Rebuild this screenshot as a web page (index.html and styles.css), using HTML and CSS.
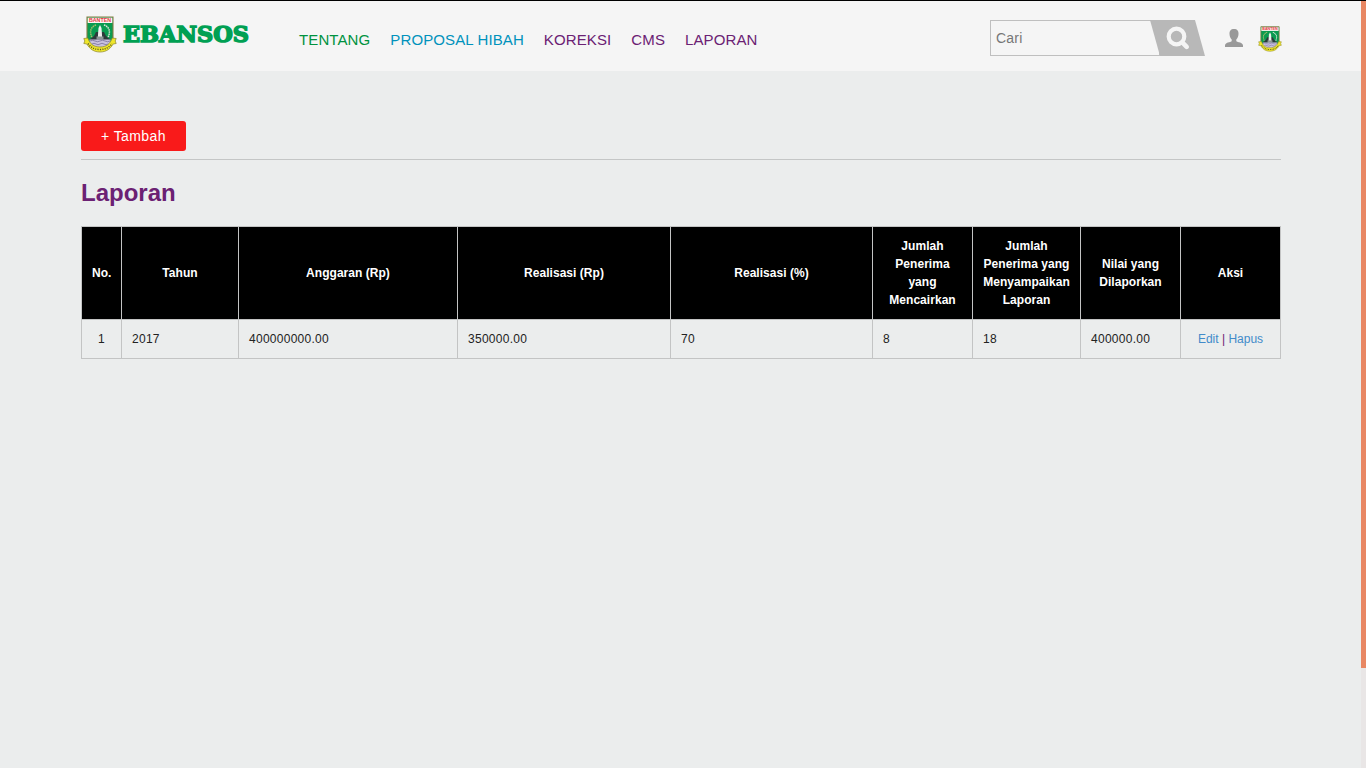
FILE: index.html
```html
<!DOCTYPE html>
<html lang="id">
<head>
<meta charset="utf-8">
<title>Laporan - EBANSOS</title>
<link rel="stylesheet" href="styles.css">
</head>
<body>
<svg class="defs" aria-hidden="true">
  <symbol id="crest" viewBox="0 0 34 37">
    <path d="M4 1h26v23c0 5-7 8-13 10C11 32 4 29 4 24z" fill="#0a9b50" stroke="#877c43" stroke-width="1.100"/>
    <path d="M4.700 1.700h24.600V7H4.700z" fill="#fff4f3"/>
    <path d="M10 23c-4-6-3-12 3-14" fill="none" stroke="#a9bd6a" stroke-width="1.500" stroke-dasharray="1.500 .7"/>
    <path d="M24 23c4-6 3-12-3-14" fill="none" stroke="#dfe3d8" stroke-width="1.500" stroke-dasharray="1.500 .7"/>
    <path d="M6 24l5-4 2-4h8l2 4 5 4z" fill="#2c3a3a"/>
    <path d="M14.700 23l.8-11L17 9l1.500 3 .8 11z" fill="#f0f0ee"/>
    <path d="M13.500 23.500v-3h7v3z" fill="#8c9696"/>
    <path d="M6.500 23.500h21v4l-5 4h-11l-5-4z" fill="#c9c0de"/>
    <path d="M7 25q2.500-1.500 5 0t5 0 5 0 5 0M9 28q2-1.500 4 0t4 0 4 0 4 0" fill="none" stroke="#77729d" stroke-width=".8"/>
    <path d="M.8 22.500l4-.5c2 6 6 9 12.200 9s10.200-3 12.200-9l4 .5-1 2.500 1 2.500-3 .5c-3 5-7 8-13.200 8S6.800 33 3.800 28l-3-.5 1-2.500z" fill="#efe72a" stroke="#8b842b" stroke-width=".7"/>
    <path d="M5 27.500q4 6 12 6t12-6" fill="none" stroke="#5f5b22" stroke-width="1.500" stroke-dasharray="1.100 1.200"/>
  </symbol>
</svg>
<header class="topbar">
  <div class="wrap topbar-inner">
    <a class="brand" href="#">
      <svg class="brand-crest" viewBox="0 0 34 37"><use href="#crest"/><text x="17" y="6.100" class="crest-name" textLength="22" lengthAdjust="spacingAndGlyphs">BANTEN</text></svg>
      <svg class="brand-name" viewBox="0 0 130 24"><text x="1" y="19.400" textLength="126" lengthAdjust="spacingAndGlyphs">EBANSOS</text></svg>
    </a>
    <nav class="menu">
      <a class="green" href="#">TENTANG</a>
      <a class="blue" href="#">PROPOSAL HIBAH</a>
      <a href="#">KOREKSI</a>
      <a href="#">CMS</a>
      <a href="#">LAPORAN</a>
    </nav>
    <form class="search">
      <input type="text" placeholder="Cari" aria-label="Cari">
      <svg class="search-btn" viewBox="0 0 55 36">
        <path d="M0 0h45l10 36H10z" fill="#b8b8b8"/>
        <circle cx="26.500" cy="16.500" r="7.800" fill="none" stroke="#f5f5f5" stroke-width="4.200"/>
        <path d="M32.300 22.300l4.400 4.500" stroke="#f5f5f5" stroke-width="4.600" stroke-linecap="round"/>
      </svg>
    </form>
    <svg class="user" viewBox="0 0 18 18"><path d="M9 0C5.700 0 4.300 2 4.500 5c.1 2.500 1 4.400 2.200 5.600v1.600C5.500 13.300 0 13.200 0 16.500V18h18v-1.500c0-3.300-5.500-3.200-6.700-4.300v-1.600c1.200-1.200 2.100-3.100 2.200-5.600C13.700 2 12.300 0 9 0z" fill="#999"/></svg>
    <svg class="avatar" viewBox="0 0 34 37"><use href="#crest"/><text x="17" y="6.100" class="crest-name" textLength="22" lengthAdjust="spacingAndGlyphs">BANTEN</text></svg>
  </div>
</header>
<main class="wrap content">
  <div class="actions"><a class="btn" href="#">+ Tambah</a></div>
  <h1>Laporan</h1>
  <table>
    <colgroup><col class="c-no"><col class="c-year"><col class="c-budget"><col class="c-real"><col class="c-pct"><col class="c-s"><col class="c-m"><col class="c-s"><col class="c-s"></colgroup>
    <thead>
      <tr><th>No.</th><th>Tahun</th><th>Anggaran (Rp)</th><th>Realisasi (Rp)</th><th>Realisasi (%)</th><th>Jumlah Penerima yang Mencairkan</th><th>Jumlah<br>Penerima yang<br>Menyampaikan<br>Laporan</th><th>Nilai yang Dilaporkan</th><th>Aksi</th></tr>
    </thead>
    <tbody>
      <tr><td class="center">1</td><td>2017</td><td>400000000.00</td><td>350000.00</td><td>70</td><td>8</td><td>18</td><td>400000.00</td><td class="center links"><a href="#">Edit</a> | <a href="#">Hapus</a></td></tr>
    </tbody>
  </table>
</main>
<div class="scrollbar"><div class="thumb"></div></div>
</body>
</html>
```
FILE: styles.css
```css
* { box-sizing: border-box; }
body {
  margin: 0;
  height: 768px;
  overflow: hidden;
  background: #ebeded;
  color: #222;
  font: 12px/18px "Liberation Sans", Arial, sans-serif;
}
a { text-decoration: none; }
svg { display: block; flex: none; }
.defs { position: absolute; width: 0; height: 0; }
.wrap { width: 1200px; margin-left: 81px; }
.topbar { height: 71px; background: #f5f5f5; border-top: 1px solid #000; }
.topbar-inner { display: flex; align-items: flex-start; }
.brand { display: flex; padding: 15px 0 0 2px; width: 218px; }
.brand-crest { width: 34px; height: 37px; }
.brand-name { width: 130px; height: 24px; margin: 7px 0 0 5px; }
.brand-name text {
  font: bold 21.5px "DejaVu Serif", serif;
  fill: #00a053;
  stroke: #00a053;
  stroke-width: 1.500px;
}
.crest-name { font: bold 5px "Liberation Sans", sans-serif; fill: #e33b43; text-anchor: middle; }
.menu { display: flex; gap: 20px; padding-top: 29px; font-size: 15px; line-height: 20px; letter-spacing: .11px; flex: 1; white-space: nowrap; }
.menu a { color: #6b2173; }
.menu .green { color: #00923f; }
.menu .blue { color: #0092bc; }
.search { display: flex; width: 215px; height: 36px; margin: 19px 20px 0 0; }
.search input {
  width: 170px;
  height: 36px;
  margin-right: -10px;
  padding: 0 5px;
  border: 1px solid #bfbfbf;
  border-radius: 0;
  background: transparent;
  font: 14px "Liberation Sans", Arial, sans-serif;
  letter-spacing: .2px;
}
.search input::placeholder { color: #777; opacity: 1; }
.search-btn { width: 55px; height: 36px; }
.user { width: 18px; height: 18px; margin: 28px 14px 0 0; }
.avatar { width: 24px; height: 26px; margin: 25px -1px 0 1px; }
.content { padding-top: 50px; }
.actions { height: 39px; border-bottom: 1px solid #c4c6c6; }
.btn {
  display: block;
  width: 105px;
  height: 30px;
  border-radius: 3px;
  background: #f91a1a;
  color: #fff;
  font-size: 14px;
  line-height: 30px;
  letter-spacing: .4px;
  text-align: center;
}
h1 { margin: 18px 0 18px; color: #6b2173; font-size: 24px; line-height: 30px; }
table { width: 1200px; table-layout: fixed; border-collapse: collapse; }
th, td { border: 1px solid #c3c4c4; padding: 10px; }
th { height: 93px; background: #000; color: #fff; vertical-align: middle; letter-spacing: .04px; }
td { height: 39px; text-align: left; letter-spacing: .27px; }
td.center { text-align: center; }
td.links { color: #6b2173; letter-spacing: 0; }
td a { color: #428bca; }
.c-no { width: 40px; }
.c-year { width: 117px; }
.c-budget { width: 219px; }
.c-real { width: 213px; }
.c-pct { width: 202px; }
.c-s { width: 100px; }
.c-m { width: 108px; }
.scrollbar { position: absolute; top: 1px; right: 0; width: 5px; height: 767px; background: #e9e6e6; }
.thumb { height: 667px; background: #e88763; }
```
